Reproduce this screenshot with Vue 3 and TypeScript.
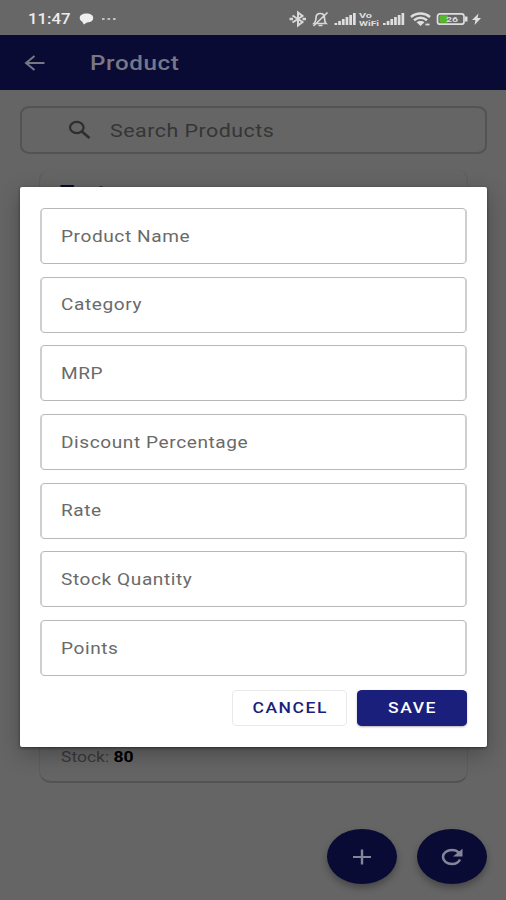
<script setup lang="ts">
const fields: string[] = [
  'Product Name',
  'Category',
  'MRP',
  'Discount Percentage',
  'Rate',
  'Stock Quantity',
  'Points',
]
const bars: number[] = [2, 4, 6, 8, 10, 12]
</script>

<template>
  <div class="screen">
    <header class="status">
      <span class="wide clock">11:47</span>
      <svg class="chat" width="15" height="12" viewBox="0 0 15 12">
        <path d="M7.500.6C3.600.6.700 2.300.700 5c0 1.600 1 2.800 2.400 3.500L4.800 11.500 8 9.400c4 0 6.200-1.800 6.200-4.400S11.500.6 7.500.6Z" fill="#eee" />
      </svg>
      <svg class="dots" width="16" height="4" viewBox="0 0 16 4" fill="#c0c0c0">
        <rect x="1" y="1" width="2.600" height="2" /><rect x="6.500" y="1" width="2.600" height="2" /><rect x="12" y="1" width="2.600" height="2" />
      </svg>
      <svg class="icons" width="200" height="20" viewBox="0 0 200 20">
        <g fill="none" stroke="#d8d8d8" stroke-width="2">
          <path d="M8.500 6.500 18.500 13 14 16.500V3.500L18.500 7 8.500 13.500" />
          <path d="M5.500 10h3.500M18.500 10h3.500" stroke-width="2.600" />
          <path d="M30 14.500h12c-1.500-1.500-1.500-3-1.500-5.500C40.500 6 38.500 4.500 36.300 4.500S32 6 32 9c0 2.500-.5 4-2 5.500ZM34.500 16.500h4M43.500 3.500 29.500 17" stroke-width="1.700" />
        </g>
        <g fill="#dedede">
          <rect v-for="(h, i) in bars" :key="'a' + i" :x="50.500 + i * 3.700" :y="16 - h" width="2.700" :height="h" />
          <rect v-for="(h, i) in bars" :key="'b' + i" :x="99 + i * 3.700" :y="16 - h" width="2.700" :height="h" />
        </g>
        <text class="vo" x="75" y="9.300" textLength="13" lengthAdjust="spacingAndGlyphs">Vo</text>
        <text class="vo" x="75" y="17" textLength="20" lengthAdjust="spacingAndGlyphs">WiFi</text>
        <g fill="none" stroke="#dedede" stroke-width="2.500">
          <path d="M127 8c5.500-4.600 13.500-4.600 19 0M130 11.300c4-3.200 9-3.200 13 0" />
          <path d="m132.500 13.200 4 3.800 4-3.800c-2-1.500-6-1.500-8 0Z" fill="#dedede" stroke="none" />
          <path d="M141.500 15.500h4" stroke-width="1.800" />
        </g>
        <rect x="153.500" y="4.800" width="26.500" height="10.400" rx="2.500" fill="#666" stroke="#dedede" stroke-width="1.700" />
        <rect x="155.500" y="6.300" width="8.500" height="7.400" rx="1" fill="#55b82b" />
        <path d="M181 7.500h2.500v5H181" fill="#dedede" />
        <text class="level" x="162" y="13" textLength="12" lengthAdjust="spacingAndGlyphs">26</text>
        <path d="M194.500 4.500 188 11h3.500l-1 5 6.500-7h-3.500Z" fill="#e0e0e0" />
      </svg>
    </header>

    <nav class="appbar">
      <svg width="22" height="18" viewBox="0 0 22 18" fill="none" stroke="#777785" stroke-width="2">
        <path d="M20.500 9H2M10.500 2 2 9l8.500 7" />
      </svg>
      <span class="wide heading">Product</span>
    </nav>

    <main class="body">
      <div class="search">
        <svg width="24" height="20" viewBox="0 0 24 20" fill="none" stroke="#2e2e2e">
          <ellipse cx="8.800" cy="7.500" rx="6.800" ry="5.600" stroke-width="2.200" />
          <path d="m13.500 11.300 8 6.700" stroke-width="2.700" />
        </svg>
        <span class="wide hint">Search Products</span>
      </div>
      <section class="card">
        <span class="wide name">Test</span>
        <p class="stock"><span class="wide stock-text">Stock: <b>80</b></span></p>
      </section>
    </main>

    <div class="fabs">
      <button class="fab">
        <svg width="20" height="16" viewBox="0 0 20 16" fill="none" stroke="#85859a">
          <path d="M1 8h18" stroke-width="2" /><path d="M10 .5v15" stroke-width="2.400" />
        </svg>
      </button>
      <button class="fab">
        <svg width="24" height="18" viewBox="0 0 24 18">
          <path d="M20 11.500C18.700 14.200 15.600 16 12 16 6.900 16 3 13 3 9S6.900 2 12 2c3 0 5.500 1.100 7 2.900" fill="none" stroke="#85859a" stroke-width="2.500" />
          <path d="M22.500.8v7.700H13Z" fill="#85859a" />
        </svg>
      </button>
    </div>

    <div class="dialog">
      <div v-for="f in fields" :key="f" class="field"><span class="wide label">{{ f }}</span></div>
      <div class="actions">
        <button class="btn cancel"><span class="wide">CANCEL</span></button>
        <button class="btn save"><span class="wide">SAVE</span></button>
      </div>
    </div>
  </div>
</template>

<style>
body {
  margin: 0;
  background: #656565;
}
</style>

<style scoped>
.screen {
  position: relative;
  display: flex;
  flex-direction: column;
  width: 506px;
  height: 900px;
  overflow: hidden;
  background: #656565;
  font-family: Roboto, "Liberation Sans", sans-serif;
}
.wide {
  display: inline-block;
  white-space: nowrap;
  transform: scaleX(1.25);
  transform-origin: left center;
}
.status {
  display: flex;
  align-items: center;
  box-sizing: border-box;
  height: 35px;
  padding: 2px 22px 0 28px;
  background: #676767;
}
.clock {
  width: 51px;
  font-size: 15px;
  font-weight: 500;
  color: #ececec;
  transform: scaleX(1.120);
}
.dots {
  margin-left: 7px;
}
.icons {
  margin-left: auto;
}
.vo {
  font: 700 8px Roboto, sans-serif;
  fill: #dedede;
}
.level {
  font: 700 8px Roboto, sans-serif;
  fill: #ddd;
}
.appbar {
  display: flex;
  align-items: center;
  box-sizing: border-box;
  height: 55px;
  padding-left: 24px;
  background: #090b34;
}
.heading {
  margin-left: 44px;
  font-size: 20px;
  font-weight: 500;
  letter-spacing: 0.500px;
  color: #777785;
  transform: scaleX(1.210);
}
.body {
  display: flex;
  flex-direction: column;
  padding: 16px 19px 0 20px;
}
.search {
  display: flex;
  align-items: center;
  box-sizing: border-box;
  height: 48px;
  padding-left: 46px;
  border: 2px solid #535353;
  border-radius: 10px / 8px;
}
.hint {
  margin-left: 18px;
  font-size: 18px;
  letter-spacing: 0.400px;
  color: #353535;
  transform: scaleX(1.190);
}
.card {
  display: flex;
  flex-direction: column;
  justify-content: space-between;
  box-sizing: border-box;
  height: 614px;
  margin: 15px 19px 0;
  padding: 11px 20px 15px;
  border: 1px solid #5d5d5d;
  border-top-color: #636363;
  border-bottom: 2px solid #535353;
  border-radius: 12px;
}
.name {
  font-size: 20px;
  font-weight: 700;
  color: #090b34;
  transform: scaleX(1.150);
}
.stock {
  margin: 0;
  padding-left: 1px;
  font-size: 14px;
  line-height: 18px;
  color: #383838;
}
.stock b {
  color: #000;
}
.fabs {
  display: flex;
  gap: 20px;
  margin: 46px 19px 0 auto;
}
.fab {
  display: flex;
  align-items: center;
  justify-content: center;
  width: 70px;
  height: 55px;
  padding: 0;
  border: 0;
  border-radius: 50%;
  background: #090b34;
  box-shadow: 0 4px 7px rgba(0, 0, 0, 0.300);
}
.dialog {
  position: absolute;
  top: 187px;
  left: 20px;
  display: flex;
  flex-direction: column;
  gap: 12.700px;
  box-sizing: border-box;
  width: 467px;
  height: 560px;
  padding: 21px 20px;
  border-radius: 2px;
  background: #fff;
  box-shadow: 0 7px 22px rgba(0, 0, 0, 0.280), 0 1px 3px rgba(0, 0, 0, 0.450);
}
.field {
  display: flex;
  align-items: center;
  box-sizing: border-box;
  height: 56px;
  flex: none;
  padding-left: 19px;
  border: solid #cfcfcf;
  border-width: 1.500px 2px;
  border-top-color: #b8b8b8;
  border-bottom-color: #b8b8b8;
  border-radius: 5px / 4px;
}
.label {
  font-size: 16px;
  letter-spacing: 0.500px;
  color: #6a6a6a;
  transform: scaleX(1.190);
}
.actions {
  display: flex;
  justify-content: flex-end;
  gap: 10px;
  padding-top: 1px;
}
.btn {
  display: flex;
  align-items: center;
  justify-content: center;
  box-sizing: border-box;
  height: 36px;
  padding: 0 0 0 2px;
  border: 0;
  border-radius: 5px / 4px;
  font: 500 14px Roboto, sans-serif;
  letter-spacing: 1.250px;
}
.btn .wide {
  transform-origin: center;
}
.cancel {
  width: 115px;
  border: 1px solid #e9e9e9;
  background: #fff;
  color: #1a1f7c;
}
.save {
  width: 110px;
  background: #1a1f7c;
  color: #fff;
  box-shadow: 0 1px 2px rgba(0, 0, 0, 0.300);
}
</style>
